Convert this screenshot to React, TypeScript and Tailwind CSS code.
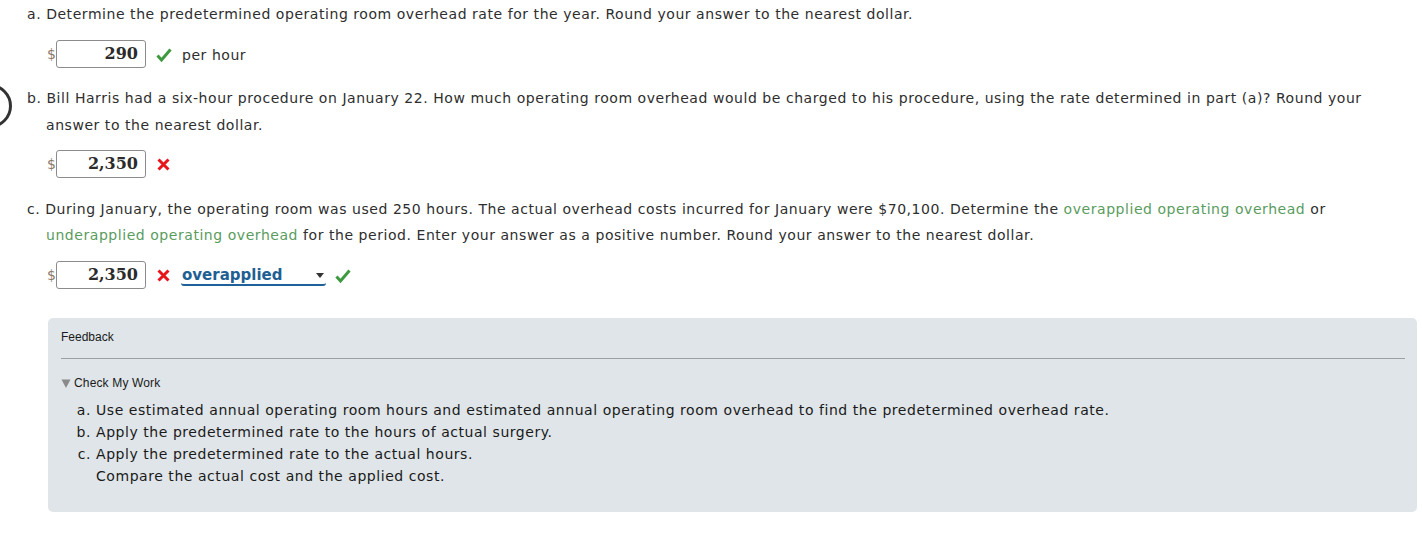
import React from "react";

const Check = () => (
  <svg width="16" height="16" viewBox="0 0 16 16" className="shrink-0">
    <path d="M1.5 8.5 L5.5 13 L14.5 2.5" fill="none" stroke="#3f9a3f" strokeWidth="3" strokeLinejoin="miter" />
  </svg>
);

const XMark = () => (
  <svg width="13" height="13" viewBox="0 0 13 13" className="shrink-0">
    <path d="M1.5 1.5 L11.5 11.5 M11.5 1.5 L1.5 11.5" fill="none" stroke="#e8141c" strokeWidth="3" />
  </svg>
);

const Money = ({ value }: { value: string }) => (
  <div className="flex items-center">
    <span className="text-[14px] text-[#8a7a6a] w-[9px] tracking-normal">$</span>
    <div
      className="w-[90px] h-[28px] border border-[#8c8c8c] rounded-[3px] bg-white flex items-center justify-end pr-[7px] text-[16px] font-bold text-[#2b2b2b] tracking-normal"
      style={{ fontFamily: '"DejaVu Serif", "Liberation Serif", serif' }}
    >
      {value}
    </div>
  </div>
);

export default function App() {
  const font = { fontFamily: '"DejaVu Sans", Verdana, sans-serif' };
  const arial = { fontFamily: '"Liberation Sans", Arial, sans-serif' };
  return (
    <div className="relative w-[1422px] h-[537px] bg-white overflow-hidden text-[#2e2e2e] tracking-[0.55px]" style={font}>
      <div className="absolute left-[-32px] top-[84px] w-[44px] h-[44px] rounded-full border-[3px] border-[#333]" />
      <div className="pl-[27px] pt-[1px] text-[14px] leading-[26px]">
        a. Determine the predetermined operating room overhead rate for the year. Round your answer to the nearest dollar.
      </div>
      <div className="flex items-center ml-[47px] mt-[13px] h-[28px]">
        <Money value="290" />
        <span className="ml-[10px] pt-[2px]"><Check /></span>
        <span className="ml-[10px] text-[14px] pt-[2px]">per hour</span>
      </div>
      <div className="pl-[46px] pr-[8px] mt-[17px] text-[14px] leading-[27px] -indent-[19px]">
        b. Bill Harris had a six-hour procedure on January 22. How much operating room overhead would be charged to his procedure, using the rate determined in part (a)? Round your answer to the nearest dollar.
      </div>
      <div className="flex items-center ml-[47px] mt-[11px] h-[28px]">
        <Money value="2,350" />
        <span className="ml-[11px] pt-[1px]"><XMark /></span>
      </div>
      <div className="pl-[46px] mt-[18px] pr-[8px] text-[14px] leading-[26px] -indent-[19px]">
        c. During January, the operating room was used 250 hours. The actual overhead costs incurred for January were $70,100. Determine the{" "}
        <span className="text-[#5a9c60]">overapplied operating overhead</span> or{" "}
        <span className="text-[#5a9c60]">underapplied operating overhead</span> for the period. Enter your answer as a positive number. Round your answer to the nearest dollar.
      </div>
      <div className="flex items-center ml-[47px] mt-[13px] h-[28px]">
        <Money value="2,350" />
        <span className="ml-[11px] pt-[1px]"><XMark /></span>
        <div className="ml-[11px] mt-[3px] w-[145px] h-[19px] bg-white rounded-[3px] border-b-2 border-[#1f6098] flex items-end justify-between pl-[1px] pr-[2px] pb-[1px]">
          <span className="text-[15px] font-bold text-[#1f5f93] leading-none tracking-normal">overapplied</span>
          <svg width="8" height="5" viewBox="0 0 8 5" className="mb-[5px]"><path d="M0 0 L8 0 L4 5 Z" fill="#333" /></svg>
        </div>
        <span className="ml-[9px] pt-[2px]"><Check /></span>
      </div>
      <div className="ml-[48px] mr-[5px] mt-[29px] h-[194px] bg-[#dfe5e8] rounded-[5px] pl-[13px] pr-[12px]">
        <div className="pt-[10px] text-[12px] leading-[18px] text-[#1a1a1a] tracking-normal" style={arial}>
          Feedback
        </div>
        <div className="mt-[12px] h-[1px] bg-[#9aa0a3]" />
        <div className="mt-[15px] flex items-center text-[12px] leading-[18px] text-[#1a1a1a] tracking-normal" style={arial}>
          <svg width="10" height="9" viewBox="0 0 10 9" className="mr-[3px]"><path d="M0.5 0.5 L9.5 0.5 L5 9 Z" fill="#8a8a8a" /></svg>
          <span className="tracking-[0.15px]">Check My Work</span>
        </div>
        <div className="mt-[7px] text-[14px] leading-[22px] text-[#1a1a1a]">
          <div className="flex"><span className="w-[35px] text-right pr-[5px]">a.</span><span>Use estimated annual operating room hours and estimated annual operating room overhead to find the predetermined overhead rate.</span></div>
          <div className="flex"><span className="w-[35px] text-right pr-[5px]">b.</span><span>Apply the predetermined rate to the hours of actual surgery.</span></div>
          <div className="flex"><span className="w-[35px] text-right pr-[5px]">c.</span><span>Apply the predetermined rate to the actual hours.<br />Compare the actual cost and the applied cost.</span></div>
        </div>
      </div>
    </div>
  );
}
